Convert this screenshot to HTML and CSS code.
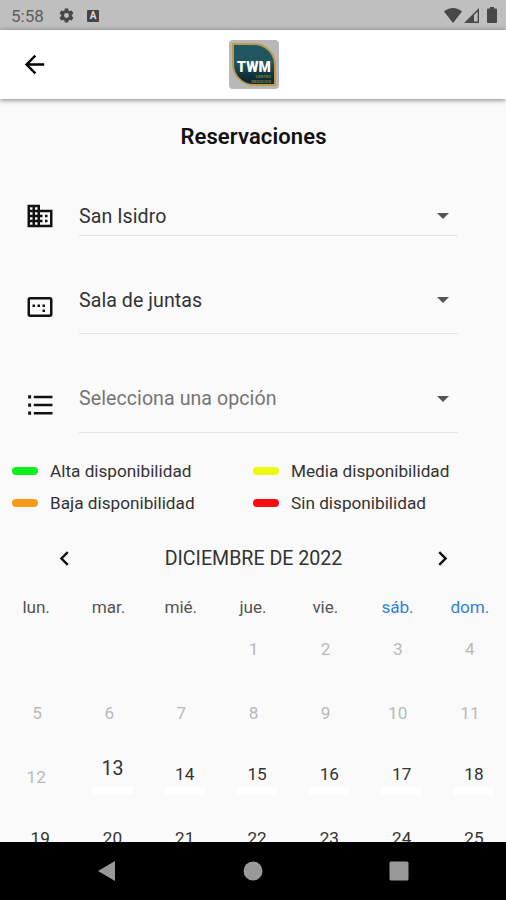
FILE: index.html
```
<!DOCTYPE html>
<html lang="es">
<head>
    <meta charset="UTF-8">
    <meta name="viewport" content="width=device-width, initial-scale=1.0">
    <title>Reservaciones</title>
    <link rel="stylesheet" href="styles.css">
</head>
<body>
    <div class="status-bar">
        <span class="time">5:58</span>
        <svg class="gear" viewBox="0 0 24 24"><path d="M19.43 12.98c.04-.32.07-.64.07-.98s-.03-.66-.07-.98l2.11-1.65c.19-.15.24-.42.12-.64l-2-3.46c-.12-.22-.39-.3-.61-.22l-2.49 1c-.52-.4-1.08-.73-1.69-.98l-.38-2.65C14.46 2.18 14.25 2 14 2h-4c-.25 0-.46.18-.49.42l-.38 2.65c-.61.25-1.17.59-1.69.98l-2.49-1c-.23-.09-.49 0-.61.22l-2 3.46c-.13.22-.07.49.12.64l2.11 1.65c-.04.32-.07.65-.07.98s.03.66.07.98l-2.11 1.65c-.19.15-.24.42-.12.64l2 3.46c.12.22.39.3.61.22l2.49-1c.52.4 1.08.73 1.69.98l.38 2.65c.03.24.24.42.49.42h4c.25 0 .46-.18.49-.42l.38-2.65c.61-.25 1.17-.59 1.69-.98l2.49 1c.23.09.49 0 .61-.22l2-3.46c.12-.22.07-.49-.12-.64zM12 15.5a3.5 3.5 0 1 1 0-7 3.5 3.5 0 0 1 0 7z"/></svg>
        <span class="badge-a">A</span>
        <svg class="wifi" viewBox="0 0 18 15"><path d="M9 15 0 3.600C5-1.200 13-1.200 18 3.600z"/></svg>
        <svg class="signal" viewBox="0 0 15 15"><path d="M15 0v15H0zM13.600 3.400 10 7v6.600h3.600z" fill-rule="evenodd"/></svg>
        <svg class="battery" viewBox="0 0 10 16"><path d="M3 0h4v1.500h2q1 0 1 1V15q0 1-1 1H1q-1 0-1-1V2.500q0-1 1-1h2z"/></svg>
    </div>
    <header class="app-bar">
        <svg class="back" viewBox="0 0 24 24"><path d="M20 11H7.830l5.590-5.590L12 4l-8 8 8 8 1.410-1.410L7.830 13H20z"/></svg>
        <div class="logo">
            <div class="logo-shape">
                <span class="logo-name">TWM</span>
                <span class="logo-sub">CENTRO</span>
                <span class="logo-sub">NEGOCIOS</span>
            </div>
        </div>
    </header>
    <main>
        <h1>Reservaciones</h1>
        <div class="field field-place">
            <svg class="icon" viewBox="0 0 24 24"><path d="M12 7V3H2v18h20V7H12zM6 19H4v-2h2v2zm0-4H4v-2h2v2zm0-4H4V9h2v2zm0-4H4V5h2v2zm4 12H8v-2h2v2zm0-4H8v-2h2v2zm0-4H8V9h2v2zm0-4H8V5h2v2zm10 12h-8v-2h2v-2h-2v-2h2v-2h-2V9h8v10zm-2-8h-2v2h2v-2zm0 4h-2v2h2v-2z"/></svg>
            <div class="select"><span>San Isidro</span><i class="caret"></i></div>
        </div>
        <div class="field">
            <svg class="icon" viewBox="0 0 24 24"><path d="M20 4H4c-1.100 0-2 .9-2 2v12c0 1.100.9 2 2 2h16c1.100 0 2-.9 2-2V6c0-1.100-.9-2-2-2zm0 14H4V6h16v12zM6 10h2v2H6zM10 10h2v2h-2zM14 10h2v2h-2zM14 14h2v2h-2z"/></svg>
            <div class="select"><span>Sala de juntas</span><i class="caret"></i></div>
        </div>
        <div class="field field-empty">
            <svg class="icon" viewBox="0 0 24 24"><path d="M2.500 4.200h2.400v2.600H2.500zM2.500 10.700h2.400v2.600H2.500zM2.500 17.200h2.400v2.600H2.500zM7 4.500h15v2H7zM7 11h15v2H7zM7 17.500h15v2H7z"/></svg>
            <div class="select"><span>Selecciona una opción</span><i class="caret"></i></div>
        </div>
        <div class="legend">
            <div><i class="dash high"></i>Alta disponibilidad</div>
            <div><i class="dash medium"></i>Media disponibilidad</div>
            <div><i class="dash low"></i>Baja disponibilidad</div>
            <div><i class="dash none"></i>Sin disponibilidad</div>
        </div>
        <div class="month">
            <svg class="arrow" viewBox="0 0 24 24"><path d="M15.410 7.410 14 6l-6 6 6 6 1.410-1.410L10.830 12z"/></svg>
            <span>DICIEMBRE DE 2022</span>
            <svg class="arrow" viewBox="0 0 24 24"><path d="M10 6 8.590 7.410 13.170 12l-4.580 4.590L10 18l6-6z"/></svg>
        </div>
        <div class="week weekdays">
            <span>lun.</span><span>mar.</span><span>mié.</span><span>jue.</span><span>vie.</span><span class="weekend">sáb.</span><span class="weekend">dom.</span>
        </div>
        <div class="week past">
            <span></span><span></span><span></span><span>1</span><span>2</span><span>3</span><span>4</span>
        </div>
        <div class="week past">
            <span>5</span><span>6</span><span>7</span><span>8</span><span>9</span><span>10</span><span>11</span>
        </div>
        <div class="week open">
            <span class="disabled">12</span><span class="today">13</span><span>14</span><span>15</span><span>16</span><span>17</span><span>18</span>
        </div>
        <div class="week open">
            <span>19</span><span>20</span><span>21</span><span>22</span><span>23</span><span>24</span><span>25</span>
        </div>
    </main>
    <nav class="nav-bar">
        <svg viewBox="0 0 20 22"><path d="M18 1v20L1 11z"/></svg>
        <svg viewBox="0 0 20 22"><circle cx="10" cy="11" r="9.500"/></svg>
        <svg viewBox="0 0 20 22"><rect x=".5" y="1.500" width="19" height="19" rx="1.500"/></svg>
    </nav>
</body>
</html>
```
FILE: styles.css
```
* {
    box-sizing: border-box;
}
body {
    margin: 0;
    height: 900px;
    display: flex;
    flex-direction: column;
    overflow: hidden;
    font-family: Roboto, "Liberation Sans", sans-serif;
    background-color: #fafafa;
    color: #333;
}
svg {
    display: block;
    flex: none;
}
.status-bar {
    height: 30px;
    flex: none;
    display: flex;
    align-items: center;
    padding: 0 9px 0 11px;
    background-color: #bfbfbf;
    color: #5c5c5c;
    fill: #484848;
}
.time {
    width: 47px;
    font-size: 17px;
    line-height: 30px;
    padding-top: 2px;
}
.gear {
    width: 17px;
    height: 17px;
}
.badge-a {
    width: 12px;
    height: 12px;
    margin: 1px auto 0 12px;
    border-radius: 1px;
    background-color: #444;
    color: #ddd;
    font-size: 10px;
    font-weight: bold;
    line-height: 12px;
    text-align: center;
}
.wifi {
    width: 18px;
    height: 15px;
}
.signal {
    width: 15px;
    height: 15px;
    margin: 0 8px 0 2px;
}
.battery {
    width: 10px;
    height: 16px;
}
.app-bar {
    position: relative;
    height: 69px;
    flex: none;
    display: flex;
    align-items: center;
    padding-left: 20px;
    background-color: #fff;
    box-shadow: 0 1px 5px rgba(0, 0, 0, 0.5);
}
.back {
    width: 29px;
    height: 29px;
}
.logo {
    width: 50px;
    height: 49px;
    margin-left: 180px;
    padding: 3px;
    border-radius: 4px;
    background-color: #b8b8ba;
}
.logo-shape {
    height: 43px;
    padding-top: 16px;
    border: 2px solid #bd9b4b;
    border-radius: 0 22px 0 22px;
    background: linear-gradient(#20565f 45%, #0c2b34 85%);
    overflow: hidden;
}
.logo-name {
    display: block;
    color: #fff;
    font-size: 14px;
    font-weight: 900;
    line-height: 13px;
    letter-spacing: 0.2px;
    margin: 0 -4px 0 3px;
}
.logo-sub {
    display: block;
    color: #857a36;
    font-size: 4px;
    font-weight: bold;
    line-height: 5px;
    text-align: right;
    padding-right: 3px;
}
main {
    flex: 1;
    min-height: 0;
    overflow: hidden;
    padding-top: 24px;
}
h1 {
    margin: 0 0 38px;
    color: #111;
    font-size: 22px;
    font-weight: 600;
    line-height: 28px;
    text-align: center;
    letter-spacing: 0.1px;
    padding-left: 1px;
}
.field {
    display: flex;
    height: 98px;
    padding: 0 48px 0 25px;
}
.icon {
    width: 30px;
    height: 30px;
    margin: 56px 24px 0 0;
    fill: #111;
}
.select {
    flex: 1;
    display: flex;
    align-items: center;
    justify-content: space-between;
    border-bottom: 1px solid #e3e3e3;
    padding: 31px 9px 0 0;
    font-size: 19.6px;
    letter-spacing: 0.06px;
}
.field-place {
    height: 47px;
}
.field-place .icon {
    margin-top: 12px;
}
.field-place .select {
    padding-top: 8px;
}
.field-empty {
    height: 99px;
}
.field-empty .select span {
    color: #757575;
}
.caret {
    border: 6px solid transparent;
    border-top-color: #555;
    border-bottom: 0;
}
.legend {
    display: grid;
    grid-template-columns: 241px 1fr;
    padding: 22px 0 0 12px;
    font-size: 17.2px;
    line-height: 32px;
}
.legend div {
    display: flex;
    align-items: center;
}
.dash {
    width: 26px;
    height: 8px;
    margin-right: 12px;
    border-radius: 4px;
}
.high {
    background-color: #0cf01c;
}
.medium {
    background-color: #edf813;
}
.low {
    background-color: #f99b16;
}
.none {
    background-color: #f80d12;
}
.month {
    display: flex;
    align-items: center;
    justify-content: space-between;
    height: 60px;
    margin-top: 9px;
    padding: 0 49px 0 50px;
    font-size: 19.6px;
}
.arrow {
    width: 29px;
    height: 29px;
    fill: #111;
}
.week {
    display: grid;
    grid-template-columns: repeat(7, 1fr);
    height: 64px;
    font-size: 17.2px;
    line-height: 20px;
    text-align: center;
}
.weekdays {
    height: 51px;
    padding-top: 9px;
    color: #555;
    letter-spacing: -0.1px;
}
.weekend {
    color: #3182d8;
}
.past {
    padding-left: 1px;
    color: #b9b9b9;
}
.open {
    padding-left: 4px;
    grid-template-columns: repeat(7, 72.300px);
}
.open span {
    height: 31px;
    margin: -3px 16px 0;
    border-bottom: 8px solid #fff;
}
.open .disabled {
    margin: 0 20px 0 12px;
    border-color: transparent;
    color: #b9b9b9;
}
.open .today {
    margin-top: -8px;
    height: 35px;
    font-size: 19.6px;
}
.nav-bar {
    height: 58px;
    flex: none;
    display: flex;
    justify-content: center;
    align-items: center;
    gap: 126px;
    background-color: #000;
    fill: #999;
}
.nav-bar svg {
    width: 20px;
    height: 22px;
}
```
